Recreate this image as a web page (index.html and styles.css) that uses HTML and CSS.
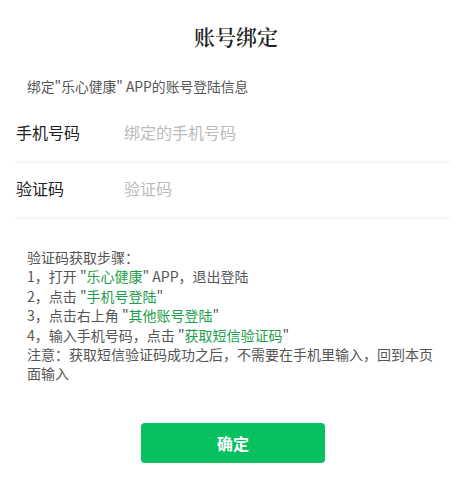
FILE: index.html
```html
<!DOCTYPE html>
<html lang="zh-CN">
<head>
<meta charset="utf-8">
<title>账号绑定</title>
<link rel="stylesheet" href="styles.css">
</head>
<body>
<div class="page">
  <h1 class="title">账号绑定</h1>
  <p class="subtitle">绑定"乐心健康" APP的账号登陆信息</p>
  <div class="form">
    <label class="row">
      <span class="label">手机号码</span>
      <input class="input" type="text" placeholder="绑定的手机号码">
    </label>
    <label class="row">
      <span class="label">验证码</span>
      <input class="input" type="text" placeholder="验证码">
    </label>
  </div>
  <div class="steps">
    <p>验证码获取步骤：</p>
    <p>1，打开 "<span class="hl">乐心健康</span>" APP，退出登陆</p>
    <p>2，点击 "<span class="hl">手机号登陆</span>"</p>
    <p>3，点击右上角 "<span class="hl">其他账号登陆</span>"</p>
    <p>4，输入手机号码，点击 "<span class="hl">获取短信验证码</span>"</p>
    <p>注意：获取短信验证码成功之后，不需要在手机里输入，回到本页面输入</p>
  </div>
  <div class="actions">
    <button class="btn" type="button">确定</button>
  </div>
</div>
</body>
</html>
```

FILE: styles.css
```css
* { box-sizing: border-box; }
html, body {
  margin: 0;
  padding: 0;
  background: #ffffff;
}
body {
  font-family: "Noto Sans CJK SC", "Liberation Sans", sans-serif;
  color: #333;
}
.page {
  width: 470px;
  padding-top: 24px;
}
.title {
  margin: 0;
  text-align: center;
  font-family: "Noto Serif CJK SC", "Liberation Serif", "Noto Sans CJK SC", serif;
  font-size: 21px;
  line-height: 24px;
  font-weight: 600;
  color: #222;
  padding-left: 2px;
}
.subtitle {
  margin: 29px 0 0;
  padding-left: 27px;
  font-size: 13.8px;
  line-height: 18px;
  color: #555;
}
.form {
  margin-top: 12px;
  padding: 0 20px 0 15px;
}
.row {
  display: flex;
  align-items: center;
  height: 56px;
  padding: 0 0 4px 1px;
  border-bottom: 2px solid #f5f5f5;
}
.label {
  width: 108px;
  font-size: 16px;
  color: #222;
}
.input {
  flex: 1;
  border: 0;
  outline: none;
  padding: 0;
  font-family: inherit;
  font-size: 16px;
  color: #333;
  background: transparent;
}
.input::placeholder {
  color: #bbb;
}
.steps {
  margin-top: 29px;
  padding: 0 30px 0 27px;
  font-size: 14px;
  line-height: 19.4px;
  color: #555;
}
.steps p {
  margin: 0;
}
.hl {
  color: #1c9e4a;
}
.actions {
  display: flex;
  justify-content: center;
  margin-top: 39px;
  padding-right: 4px;
}
.btn {
  width: 184px;
  height: 40px;
  border: 0;
  border-radius: 4px;
  background: #07c160;
  color: #fff;
  font-family: "Noto Sans CJK SC", sans-serif;
  font-size: 16px;
  font-weight: 700;
}
```
